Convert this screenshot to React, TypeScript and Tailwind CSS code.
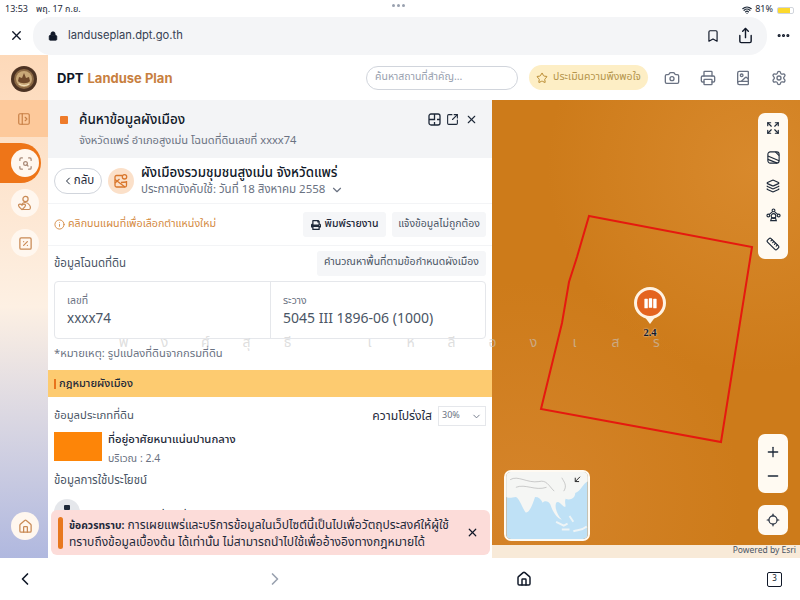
import type { ReactNode } from "react"
import {
  Bookmark,
  BookImage,
  Camera,
  ChevronDown,
  ChevronLeft,
  ChevronRight,
  Ellipsis,
  Expand,
  House,
  Info,
  Layers,
  Locate,
  Lock,
  Minus,
  PanelLeftOpen,
  Plus,
  Printer,
  Ruler,
  ScanSearch,
  Settings,
  Share,
  SquareArrowOutUpRight,
  SquarePercent,
  Star,
  Wifi,
  X,
} from "lucide-react"
import { FaPrint } from "react-icons/fa"

const font = "font-['Noto_Sans_Thai','Noto_Sans','Liberation_Sans',sans-serif]"

// wide spaced letters of the watermark, "" keeps an empty slot
const watermark = ["พ", "ง", "ศ์", "สุ", "ธี", "", "เ", "ห", "ลี", "อ", "ง", "เ", "ส", "ร"]

function StatusBar() {
  return (
    <div className="relative flex h-4 shrink-0 items-center justify-between bg-white pl-[5px] pr-[6px] pt-1 text-[9px] text-gray-800">
      <div className="flex gap-2">
        <span>13:53</span>
        <span>พฤ. 17 ก.ย.</span>
      </div>
      <div className="flex items-center gap-[3px]">
        <Wifi className="h-[10px] w-[10px]" strokeWidth={3} />
        <span>81%</span>
        <div className="ml-[1px] h-[7px] w-[17px] rounded-[2px] border border-gray-300 bg-[linear-gradient(90deg,#fcd92d_80%,transparent_80%)]" />
      </div>
      <div className="absolute left-[392px] top-[4px] flex gap-[2px]">
        <div className="h-[3px] w-[3px] rounded-full bg-gray-400" />
        <div className="h-[3px] w-[3px] rounded-full bg-gray-400" />
        <div className="h-[3px] w-[3px] rounded-full bg-gray-400" />
      </div>
    </div>
  )
}

function UrlBar() {
  return (
    <div className="flex h-[39px] shrink-0 items-center bg-white">
      <div className="flex w-[33px] justify-center">
        <X className="h-[15px] w-[15px] text-gray-900" strokeWidth={2.2} />
      </div>
      <div className="flex h-[38px] w-[734px] items-center rounded-[18px] bg-[#f4f5f7] pl-[15px] pr-[13px]">
        <Lock className="h-[10px] w-[10px] text-gray-900" fill="currentColor" />
        <span className="ml-[10px] font-['Inter',sans-serif] text-[11.2px] text-gray-700">landuseplan.dpt.go.th</span>
        <Bookmark className="ml-auto h-[14px] w-[14px] text-gray-900" strokeWidth={2} />
        <Share className="ml-[17px] h-[17px] w-[17px] text-gray-900" strokeWidth={2} />
      </div>
      <div className="flex flex-1 justify-center">
        <Ellipsis className="h-[15px] w-[15px] text-gray-900" strokeWidth={3} />
      </div>
    </div>
  )
}

function AppHeader() {
  return (
    <div className="flex h-[45px] shrink-0 items-center bg-white pl-[9px] pr-[13px]">
      <div className="pt-[3px] font-['Inter',sans-serif] text-[13px] font-bold">
        <span className="text-gray-900">DPT</span>
        <span className="ml-1 text-[#c8803f]">Landuse Plan</span>
      </div>
      <div className="ml-auto flex h-[24px] w-[152px] items-center rounded-full border border-gray-300 pl-2 text-[10.5px] text-gray-400">
        ค้นหาสถานที่สำคัญ...
      </div>
      <div className="ml-[11px] flex h-[25px] w-[119px] items-center justify-center gap-[5px] rounded-full bg-[#fdeec5] text-[10.5px] text-[#b5954c]">
        <Star className="h-3 w-3 text-[#b98a2f]" />
        ประเมินความพึงพอใจ
      </div>
      <Camera className="ml-4 h-4 w-4 text-gray-500" />
      <Printer className="ml-[20px] h-4 w-4 text-gray-500" />
      <BookImage className="ml-[19px] h-4 w-4 text-gray-500" />
      <Settings className="ml-[20px] h-4 w-4 text-gray-500" />
    </div>
  )
}

function NavCircle({ children }: { children: ReactNode }) {
  return (
    <div className="ml-[2px] flex h-7 w-7 items-center justify-center rounded-full bg-[#fff7ef] text-[#c98a55]">
      {children}
    </div>
  )
}

function Emblem() {
  return (
    <svg viewBox="0 0 26 26" className="mt-[2px] h-[26px] w-[26px]">
      <circle cx="13" cy="13" r="13" fill="#4d3323" />
      <circle cx="13" cy="13" r="10" fill="#8d6a45" />
      <circle cx="13" cy="13" r="8" fill="#c9a878" />
      <path d="M7 15C9 18 17 18 19 15L18 11L15 12L13 7L11 12L8 11Z" fill="#70492b" />
      <path d="M8 18C11 20 15 20 18 18" fill="none" stroke="#f0dcb8" strokeWidth="1.2" />
    </svg>
  )
}

function PersonHeart() {
  return (
    <svg viewBox="0 0 16 16" fill="none" stroke="currentColor" strokeWidth="1.2" className="h-[16px] w-[16px]">
      <circle cx="8.5" cy="4" r="2.6" />
      <path d="M5 14.5H12C13.5 14.5 14 12 12.5 10C11.5 8.5 9.5 7.5 8 7.5C6.5 7.5 5.5 8.3 5 9.2" />
      <path d="M5 14.5C3 13 1.5 12 1.5 10.6C1.5 9 3.8 8.6 5 10.2C6.2 8.6 8.5 9 8.5 10.6C8.5 12 7 13 5 14.5Z" />
    </svg>
  )
}

function Sidebar() {
  return (
    <div className="flex w-12 shrink-0 flex-col bg-gradient-to-b from-[#fdd9b9] via-[#fdf0e3] via-50% to-[#b0b8df]">
      <div className="flex h-[45px] w-full items-center justify-center">
        <Emblem />
      </div>
      <div className="flex h-[37px] w-full items-center justify-center bg-[#fdc99b]">
        <PanelLeftOpen className="h-[14px] w-[14px] text-[#c77f45]" />
      </div>
      <div className="mt-[6px] flex h-[40px] w-[41px] items-center rounded-r-[20px] bg-[#ee7518] pl-[11px]">
        <div className="flex h-[28px] w-[28px] items-center justify-center rounded-full bg-[#fff7ef] text-[#a98a78]">
          <ScanSearch className="h-[15px] w-[15px]" />
        </div>
      </div>
      <div className="mt-[6px] flex flex-col gap-[12px] pl-[9px]">
        <NavCircle>
          <PersonHeart />
        </NavCircle>
        <NavCircle>
          <SquarePercent className="h-[15px] w-[15px]" />
        </NavCircle>
      </div>
      <div className="mb-[18px] mt-auto pl-[9px]">
        <NavCircle>
          <House className="h-[15px] w-[15px]" />
        </NavCircle>
      </div>
    </div>
  )
}

function Panel() {
  return (
    <div className="relative h-[458px] w-[444px] shrink-0 overflow-hidden bg-white">
      <div className="flex h-[58px] bg-[#f3f4f6] pl-3 pr-[14px] pt-[10px]">
        <div className="mr-[11px] mt-[6px] h-2 w-2 rounded-[1px] bg-[#ee7b2a]" />
        <div className="min-w-0 flex-1">
          <div className="text-[13.5px] font-medium leading-5 text-gray-900">ค้นหาข้อมูลผังเมือง</div>
          <div className="mt-[1px] text-[11.1px] leading-5 text-gray-500">
            จังหวัดแพร่ อำเภอสูงเม่น โฉนดที่ดินเลขที่ xxxx74
          </div>
        </div>
        <div className="flex h-[18px] items-center gap-[5px] text-gray-800">
          <svg viewBox="0 0 13 13" fill="none" stroke="currentColor" strokeWidth="1.3" className="h-[13px] w-[13px]">
            <rect x="1" y="1" width="11" height="11" rx="2" />
            <path d="M6.5 1V6.5H1M6.5 12V9M12 6.5H9" />
          </svg>
          <SquareArrowOutUpRight className="h-[13px] w-[13px]" />
          <X className="ml-[1px] h-[13px] w-[13px]" />
        </div>
      </div>

      <div className="flex h-[46px] items-center border-b border-gray-100 pl-[6px]">
        <div className="flex h-[26px] w-[48px] items-center justify-center rounded-full border border-gray-300 text-[11.5px] text-gray-800">
          <ChevronLeft className="h-3 w-3" />
          กลับ
        </div>
        <div className="ml-[6px] flex h-[26px] w-[26px] items-center justify-center rounded-full bg-[#fbe0c9] text-[#d9772d]">
          <svg viewBox="0 0 16 16" fill="none" stroke="currentColor" strokeWidth="1.3" className="h-[16px] w-[16px]">
            <path d="M9 2.5H3.5C2.7 2.5 2 3.2 2 4V12.5C2 13.3 2.7 14 3.5 14H12C12.8 14 13.5 13.3 13.5 12.5V8" />
            <path d="M2 6.5L12 14M2 10L6.5 6M8 9.5L13.5 9" />
            <circle cx="11.5" cy="3.8" r="2.2" />
          </svg>
        </div>
        <div className="ml-[7px] pt-[1px]">
          <div className="text-[13.3px] font-medium leading-[18px] text-gray-900">
            ผังเมืองรวมชุมชนสูงเม่น จังหวัดแพร่
          </div>
          <div className="flex items-center text-[11.5px] leading-[16px] text-gray-500">
            ประกาศบังคับใช้: วันที่ 18 สิงหาคม 2558
            <ChevronDown className="ml-[5px] h-[14px] w-[14px]" />
          </div>
        </div>
      </div>

      <div className="flex h-[42px] items-center justify-between border-b border-gray-100 px-[6px]">
        <div className="flex items-center gap-[3px] text-[10.7px] text-[#d48a42]">
          <Info className="h-[11px] w-[11px]" />
          คลิกบนแผนที่เพื่อเลือกตำแหน่งใหม่
        </div>
        <div className="flex gap-[6px]">
          <div className="flex h-[25px] w-[83px] items-center justify-center gap-[4px] rounded-[3px] bg-[#f5f6f8] text-[10.5px] font-medium text-gray-800">
            <FaPrint className="h-[10px] w-[10px]" />
            พิมพ์รายงาน
          </div>
          <div className="flex h-[25px] w-[94px] items-center justify-center rounded-[3px] bg-[#f5f6f8] text-[10.5px] text-gray-600">
            แจ้งข้อมูลไม่ถูกต้อง
          </div>
        </div>
      </div>

      <div className="flex h-[34px] items-center justify-between px-[6px]">
        <span className="pt-[1px] text-[11.5px] text-gray-600">ข้อมูลโฉนดที่ดิน</span>
        <div className="flex h-[25px] w-[169px] items-center justify-center rounded-[3px] bg-[#f5f6f8] text-[10.5px] text-gray-600">
          คำนวณหาพื้นที่ตามข้อกำหนดผังเมือง
        </div>
      </div>

      <div className="mx-[6px] mt-[1px] flex h-[58px] rounded-[4px] border border-gray-200">
        <div className="w-[216px] border-r border-gray-200 pl-3 pt-[12px]">
          <div className="text-[10.5px] leading-[14px] text-gray-500">เลขที่</div>
          <div className="mt-[2px] text-[13.5px] leading-[18px] text-gray-600">xxxx74</div>
        </div>
        <div className="flex-1 pl-3 pt-[12px]">
          <div className="text-[10.5px] leading-[14px] text-gray-500">ระวาง</div>
          <div className="mt-[2px] text-[14px] leading-[18px] text-gray-600">5045 III 1896-06 (1000)</div>
        </div>
      </div>

      <div className="px-[6px] pt-[7px] text-[11.2px] leading-[16px] text-gray-500">
        *หมายเหตุ: รูปแปลงที่ดินจากกรมที่ดิน
      </div>

      <div className="mt-[8px] flex h-[27px] items-center bg-[#fdcb70] pl-[6px] pt-[1px] text-[11px] font-medium text-gray-800">
        <div className="mr-[3px] h-[10px] w-[2px] bg-[#e8741c]" />
        กฎหมายผังเมือง
      </div>

      <div className="flex h-[35px] items-center justify-between px-[6px] pt-[3px]">
        <span className="text-[11.3px] text-gray-600">ข้อมูลประเภทที่ดิน</span>
        <div className="flex items-center gap-[6px]">
          <span className="text-[12.2px] text-gray-800">ความโปร่งใส</span>
          <div className="flex h-[20px] w-[48px] items-center justify-between border border-gray-200 pl-[3px] pr-[3px] text-[9px] text-gray-500">
            30%
            <ChevronDown className="h-[11px] w-[11px]" />
          </div>
        </div>
      </div>

      <div className="flex px-[6px]">
        <div className="h-[29px] w-[48px] bg-[#fd8508]" />
        <div className="ml-[6px] pt-[1px]">
          <div className="text-[11.3px] font-medium leading-[14px] text-gray-800">ที่อยู่อาศัยหนาแน่นปานกลาง</div>
          <div className="mt-[5px] text-[10.5px] leading-[14px] text-gray-500">บริเวณ : 2.4</div>
        </div>
      </div>

      <div className="px-[6px] pt-[4px] text-[11.5px] leading-[22px] text-gray-600">ข้อมูลการใช้ประโยชน์</div>
      <div className="ml-[6px] mt-[7px] flex items-start">
        <div className="flex h-[26px] w-[26px] justify-center rounded-full bg-gray-200 pt-[6px]">
          <div className="h-[5px] w-[6px] rounded-[1px] bg-gray-800" />
        </div>
        <span className="ml-2 pt-[10px] text-[12px] leading-[16px] text-gray-800">การใช้ประโยชน์ที่ดินที่อนุญาต</span>
      </div>

      <div className="absolute bottom-[3px] left-[3px] right-[2px] flex h-[45px] items-center rounded-[6px] bg-[#fcdcd9] pl-[7px] pr-[11px]">
        <div className="h-[32px] w-[5px] rounded-full bg-[#e8781f]" />
        <div className="ml-[6px] flex-1 pt-[2px] text-[12.05px] leading-[16px] text-gray-800">
          <div>
            <span className="text-[10.3px] font-bold">ข้อควรทราบ:</span> การเผยแพร่และบริการข้อมูลในเว็ปไซต์นี้เป็นไปเพื่อวัตถุประสงค์ให้ผู้ใช้
          </div>
          <div>ทราบถึงข้อมูลเบื้องต้น ได้เท่านั้น ไม่สามารถนำไปใช้เพื่ออ้างอิงทางกฎหมายได้</div>
        </div>
        <X className="h-[13px] w-[13px] text-gray-900" strokeWidth={2.2} />
      </div>
    </div>
  )
}

function MiniMap() {
  return (
    <svg viewBox="0 0 85 70" className="h-full w-full">
      <rect width="85" height="70" fill="#bfe1f6" />
      <path
        d="M0 0H85V10C80 12 78 20 72 22C72 28 66 30 62 28C60 32 64 38 60 36C56 32 54 30 52 32C50 38 54 46 58 50C52 48 48 40 46 34C44 30 40 30 38 32C36 28 34 26 30 26C28 32 24 44 20 42C16 36 14 28 10 26C6 26 4 28 0 26Z"
        fill="#f5f6f4"
      />
      <path d="M52 52L60 56L64 54M66 46L70 52M58 60L66 60M70 62C74 60 78 62 84 57" fill="none" stroke="#eef4f6" strokeWidth="2" />
      <path d="M4 8C12 3 22 12 34 10C42 8 44 14 50 20M10 16C20 12 30 20 42 16M58 6C60 10 64 14 60 20" fill="none" stroke="#b4b4b4" strokeWidth="0.7" />
      <path d="M77 5L72 10M72 6V10H76" fill="none" stroke="#222" strokeWidth="1" />
    </svg>
  )
}

function MapPane() {
  return (
    <div className="flex min-w-0 flex-1 flex-col">
      <div className="relative flex-1 overflow-hidden bg-[#cd7b1a] bg-[radial-gradient(circle_at_85%_15%,#d8892c_0%,transparent_45%),radial-gradient(circle_at_10%_90%,#d5842a_0%,transparent_45%)]">
        <svg viewBox="0 0 308 445" className="absolute inset-0 h-full w-full">
          <polygon
            points="97,116 260,147 229,342 49,309 70,223 77,182 85,157"
            fill="none"
            stroke="#e5190f"
            strokeWidth="2"
          />
        </svg>

        <div className="absolute left-[142px] top-[187px] flex w-[32px] flex-col items-center">
          <div className="flex h-[32px] w-[32px] items-center justify-center rounded-full border-[3px] border-[#fff3e3] bg-[#e4641f]">
            <svg viewBox="0 0 16 16" className="h-[15px] w-[15px]" fill="white">
              <rect x="1.5" y="3" width="3.6" height="10" rx="0.6" />
              <rect x="6.2" y="2.5" width="3.6" height="10" rx="0.6" />
              <rect x="10.9" y="3" width="3.6" height="10" rx="0.6" />
            </svg>
          </div>
          <div className="-mt-[3px] h-0 w-0 border-x-[6px] border-t-[8px] border-x-transparent border-t-[#fff3e3]" />
          <div className="mt-[2px] font-['Liberation_Serif',serif] text-[10.5px] font-bold leading-[14px] text-gray-900 [text-shadow:0_0_2px_white]">
            2.4
          </div>
        </div>

        <div className="absolute right-3 top-[13px] flex h-[146px] w-[30px] flex-col items-center justify-between rounded-[7px] bg-[#fffaf2] py-[8px] text-gray-800">
          <Expand className="h-[14px] w-[14px]" />
          <svg viewBox="0 0 16 16" fill="none" stroke="currentColor" strokeWidth="1.2" className="h-[15px] w-[15px]">
            <rect x="2" y="2" width="12" height="12" rx="2.5" />
            <path d="M2 6.5L14 11.5M2 10L12 14M10 2L14 6" />
          </svg>
          <Layers className="h-[14px] w-[14px]" />
          <svg viewBox="0 0 16 16" fill="none" stroke="currentColor" strokeWidth="1.2" className="h-[15px] w-[15px]">
            <circle cx="8" cy="2.5" r="1.5" />
            <circle cx="2.5" cy="8" r="1.5" />
            <circle cx="13.5" cy="8" r="1.5" />
            <circle cx="8" cy="8.5" r="2.5" />
            <path d="M5 13.5H11L10 10.5H6ZM7 3.8L3.5 6.8M9 3.8L12.5 6.8" />
          </svg>
          <Ruler className="h-[14px] w-[14px]" />
        </div>

        <div className="absolute right-3 top-[334px] flex h-[59px] w-[30px] flex-col items-center justify-center gap-[8px] rounded-[7px] bg-[#fffaf2] text-gray-800">
          <Plus className="h-[16px] w-[16px]" />
          <Minus className="h-[16px] w-[16px]" />
        </div>

        <div className="absolute right-3 top-[405px] flex h-[30px] w-[30px] items-center justify-center rounded-[7px] bg-[#fffaf2] text-gray-800">
          <Locate className="h-[14px] w-[14px]" />
        </div>

        <div className="absolute left-[12px] top-[370px] h-[71px] w-[86px] overflow-hidden rounded-[7px] border-[2px] border-[#fffaf2]">
          <MiniMap />
        </div>
      </div>
      <div className="flex h-[13px] shrink-0 items-center justify-end bg-[#f8ead8] pr-[4px] text-[8.5px] text-gray-600">
        Powered by Esri
      </div>
    </div>
  )
}

function BottomBar() {
  return (
    <div className="flex h-[42px] shrink-0 items-center bg-white">
      <ChevronLeft className="ml-[15px] h-[20px] w-[20px] text-gray-900" strokeWidth={2} />
      <ChevronRight className="ml-[230px] h-[20px] w-[20px] text-gray-400" strokeWidth={2} />
      <House className="ml-[231px] h-[16px] w-[16px] text-gray-900" strokeWidth={2.2} />
      <div className="ml-auto mr-[18px] flex h-[15px] w-[15px] items-center justify-center rounded-[2px] border border-gray-900 text-[8px] text-gray-900">
        3
      </div>
    </div>
  )
}

function Watermark() {
  return (
    <div className="pointer-events-none absolute left-[103px] top-[333px] flex text-[14px] leading-[20px] text-[#c8c8c8]/60">
      {watermark.map((c, i) => (
        <div key={i} className="flex h-5 w-[41px] justify-center">
          {c && <span>{c}</span>}
        </div>
      ))}
    </div>
  )
}

export default function App() {
  return (
    <div className={`relative flex h-[600px] w-[800px] flex-col overflow-hidden bg-white ${font}`}>
      <StatusBar />
      <UrlBar />
      <div className="flex min-h-0 flex-1">
        <Sidebar />
        <div className="flex min-w-0 flex-1 flex-col">
          <AppHeader />
          <div className="flex min-h-0 flex-1">
            <Panel />
            <MapPane />
          </div>
        </div>
      </div>
      <BottomBar />
      <Watermark />
    </div>
  )
}
